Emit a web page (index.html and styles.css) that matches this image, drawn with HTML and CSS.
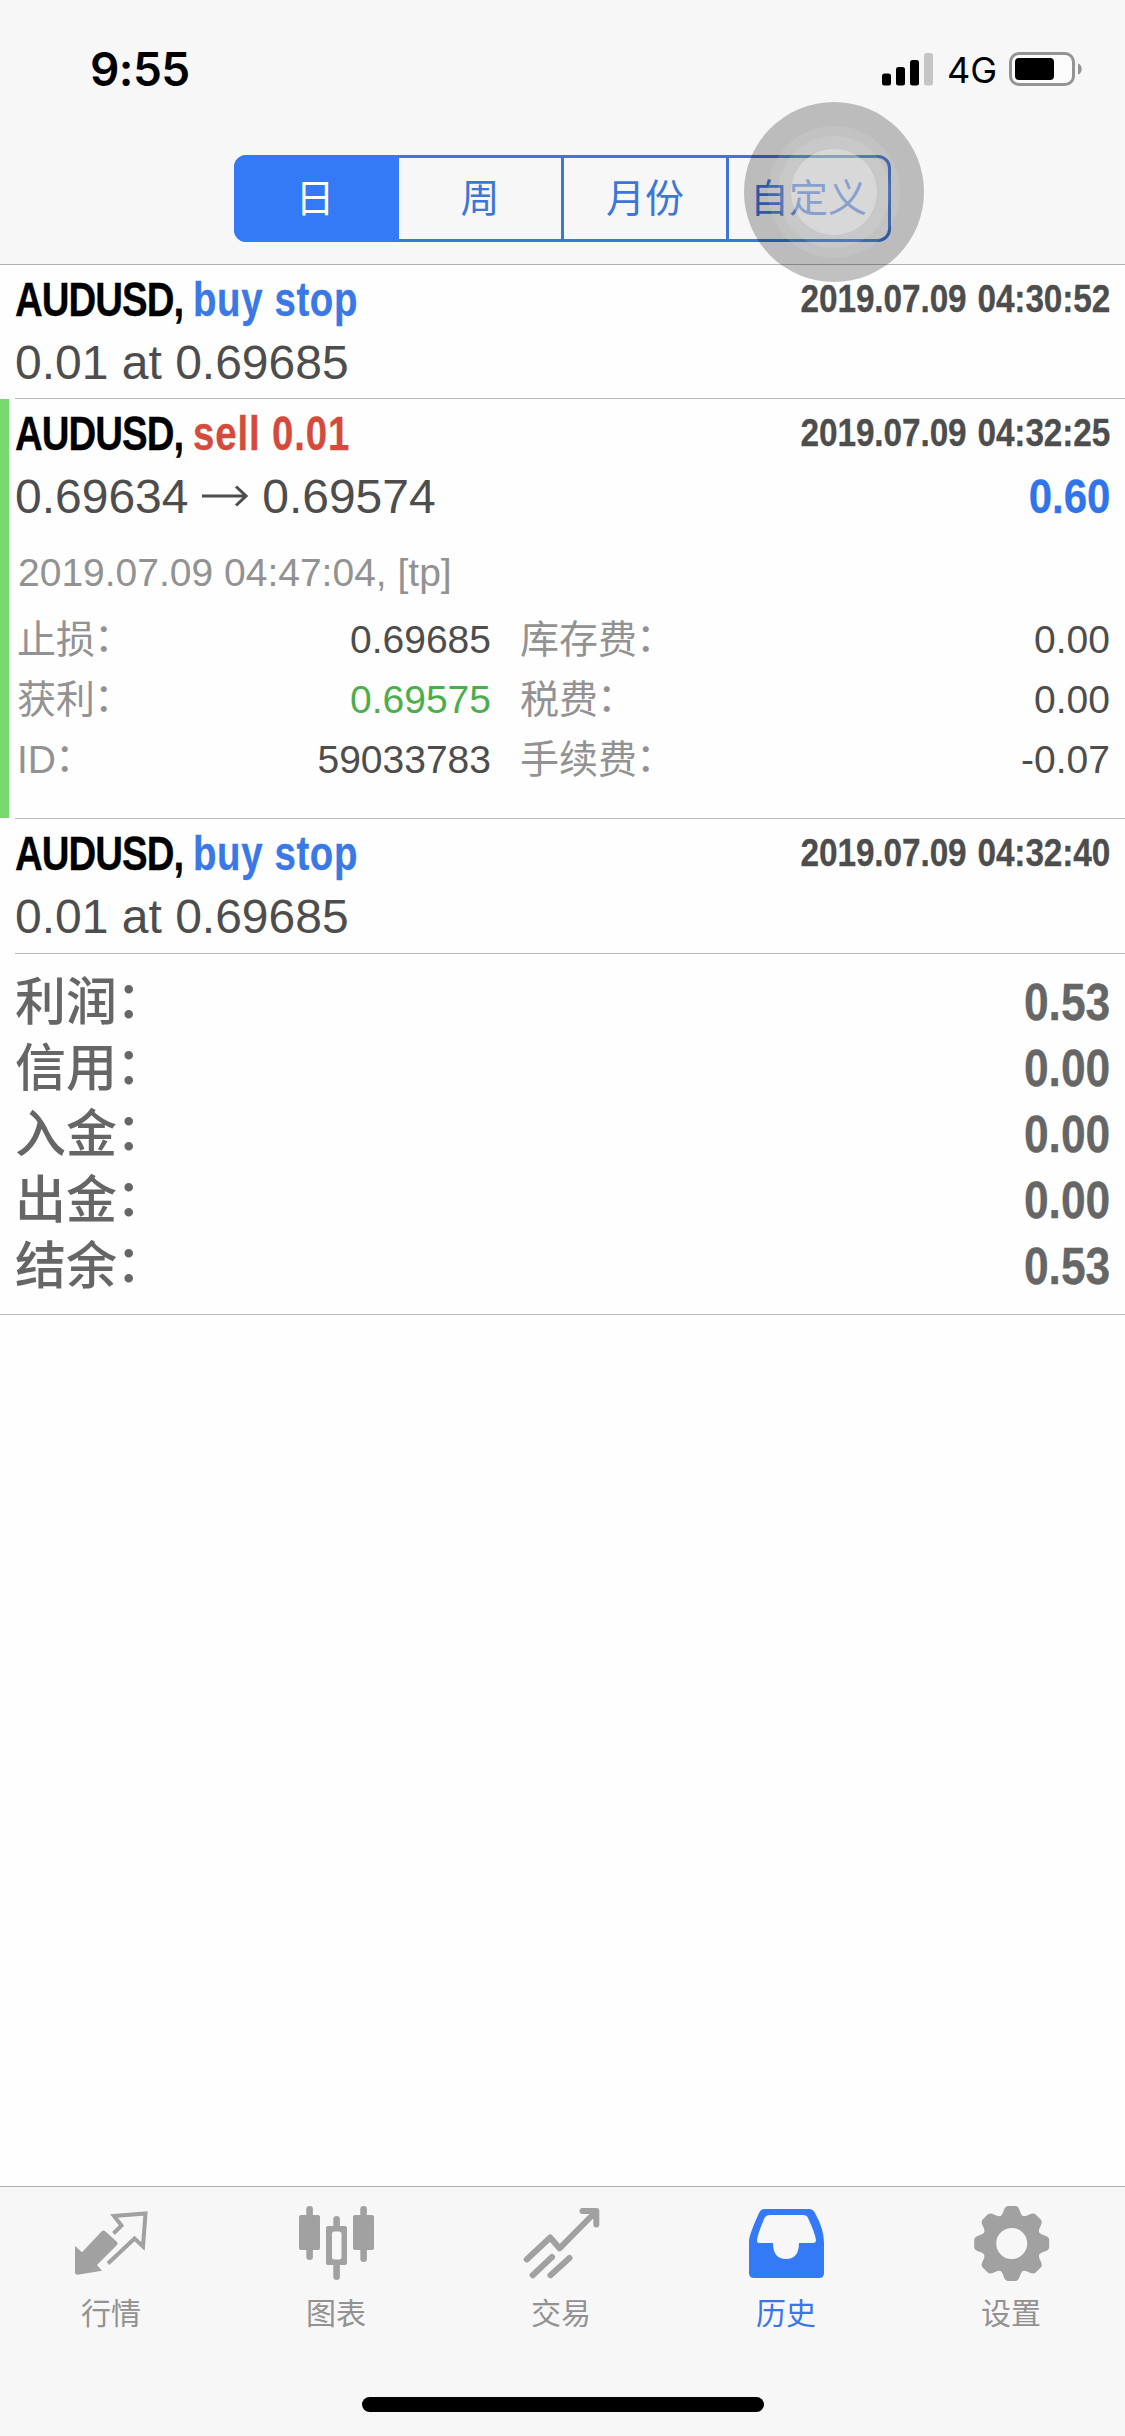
FILE: index.html
```html
<!DOCTYPE html>
<html lang="zh-CN">
<head>
<meta charset="utf-8">
<title>历史</title>
<link rel="stylesheet" href="styles.css">
</head>
<body>
<div class="app">
  <header class="header">
    <div class="status">
      <span class="clock">9:55</span>
      <div class="status-right">
        <svg class="signal" width="52" height="33" viewBox="0 0 52 33"><rect x="0" y="20.500" width="9" height="12" rx="2.500"/><rect x="14" y="14" width="9" height="18.500" rx="2.500"/><rect x="28" y="7" width="9" height="25.500" rx="2.500"/><rect x="42" y="0" width="9" height="32.500" rx="2.500" fill="#c5c5c5"/></svg>
        <span class="network">4G</span>
        <svg class="battery" width="74" height="34" viewBox="0 0 74 34"><rect x="1.500" y="1.500" width="63" height="31" rx="8.500" fill="#fcfcfc" stroke="#949494" stroke-width="3"/><rect x="6" y="6" width="39" height="22" rx="4"/><path d="M69 11.500c5 1.500 5 9.500 0 11z" fill="#949494"/></svg>
      </div>
    </div>
    <nav class="segments">
      <span class="segment segment-on">日</span><span class="segment segment-after">周</span><span class="segment">月份</span><span class="segment">自定义</span>
    </nav>
    <div class="touch"><i class="ring ring-a"></i><i class="ring ring-b"></i><i class="ring ring-c"></i></div>
  </header>

  <main class="history">
    <section class="deal">
      <div class="deal-head"><h2 class="deal-title"><span class="symbol">AUDUSD, </span><span class="buy">buy stop</span></h2><time class="deal-time">2019.07.09 04:30:52</time></div>
      <div class="deal-price">0.01 at 0.69685</div>
    </section>
    <section class="deal deal-open">
      <div class="deal-head"><h2 class="deal-title"><span class="symbol">AUDUSD, </span><span class="sell">sell 0.01</span></h2><time class="deal-time">2019.07.09 04:32:25</time></div>
      <div class="deal-price"><span class="move">0.69634 <svg class="arrow" width="46" height="22" viewBox="0 0 46 22"><path d="M0 11H44M34 1.500L44 11L34 20.500"/></svg> 0.69574</span><b class="profit">0.60</b></div>
      <div class="comment">2019.07.09 04:47:04, [tp]</div>
      <dl class="details">
        <dt>止损<span class="colon">：</span></dt><dd>0.69685</dd><dt>库存费<span class="colon">：</span></dt><dd>0.00</dd>
        <dt>获利<span class="colon">：</span></dt><dd class="hit">0.69575</dd><dt>税费<span class="colon">：</span></dt><dd>0.00</dd>
        <dt>ID<span class="colon">：</span></dt><dd>59033783</dd><dt>手续费<span class="colon">：</span></dt><dd>-0.07</dd>
      </dl>
    </section>
    <section class="deal deal-last">
      <div class="deal-head"><h2 class="deal-title"><span class="symbol">AUDUSD, </span><span class="buy">buy stop</span></h2><time class="deal-time">2019.07.09 04:32:40</time></div>
      <div class="deal-price">0.01 at 0.69685</div>
    </section>
    <section class="summary">
      <div class="total"><span>利润<span class="colon">：</span></span><b>0.53</b></div>
      <div class="total"><span>信用<span class="colon">：</span></span><b>0.00</b></div>
      <div class="total"><span>入金<span class="colon">：</span></span><b>0.00</b></div>
      <div class="total"><span>出金<span class="colon">：</span></span><b>0.00</b></div>
      <div class="total"><span>结余<span class="colon">：</span></span><b>0.53</b></div>
    </section>
  </main>

  <footer class="footer">
    <nav class="tabs">
      <div class="tab">
        <svg width="225" height="100" viewBox="0 0 225 100"><path d="M75 59L82 65.300L101.500 44.500Q103.500 42.500 105.500 44.500L116.500 54.500Q118.500 56.500 116.500 58.500L97 78L102 83.700L77.500 87.700Q75 87.700 75 85Z" fill="#a1a1a1"/><path d="M113.500 46.500L121.500 38.500L114 29L145.500 26.500L143 59.500L134.500 51.500L108 76.500" fill="none" stroke="#a1a1a1" stroke-width="4"/></svg>
        <span>行情</span>
      </div>
      <div class="tab">
        <svg width="225" height="100" viewBox="0 0 225 100" fill="#a1a1a1"><rect x="74" y="28" width="21" height="35" rx="2"/><rect x="81.300" y="19" width="6.600" height="54" rx="3.300"/><rect x="128" y="28" width="21" height="35" rx="2"/><rect x="135.300" y="19" width="6.600" height="56" rx="3.300"/><path d="M103 39H120Q122 39 122 41V76Q122 78 120 78H103Q101 78 101 76V41Q101 39 103 39ZM107 47V70Q107 72.500 109.500 72.500H114Q116.500 72.500 116.500 70V47Q116.500 44.500 114 44.500H109.500Q107 44.500 107 47Z" fill-rule="evenodd"/><rect x="108.300" y="29" width="6.600" height="13" rx="3.300"/><path d="M108.300 76H114.900V90Q114.900 93 111.600 93Q108.300 93 108.300 90Z"/></svg>
        <span>图表</span>
      </div>
      <div class="tab">
        <svg width="225" height="100" viewBox="0 0 225 100" fill="none" stroke="#a1a1a1" stroke-width="6" stroke-linecap="round" stroke-linejoin="round"><path d="M76.700 72.500L100.200 50.500L109.500 61.300L145.500 25M132.500 24H146.300V37.500M82.700 88.300L102 70M100.500 88.300L119.500 71"/></svg>
        <span>交易</span>
      </div>
      <div class="tab tab-on">
        <svg width="225" height="100" viewBox="0 0 225 100"><path d="M89 22H134Q138 22 140 26Q149 42 149 56V86Q149 91 144 91H79Q74 91 74 86V54Q74 48 84 26Q86 22 89 22ZM95 28Q91 28 89.500 31Q82 48 82 54Q82 56 84 56H98Q98 72 111 72Q124 72 124 56H138Q141 56 141 53Q140 46 133 31Q132 28 128 28Z" fill="#347af6" fill-rule="evenodd"/></svg>
        <span>历史</span>
      </div>
      <div class="tab">
        <svg width="225" height="100" viewBox="0 0 225 100">
          <defs><path id="tooth" d="M-13 -24L-11 -27.500Q-9 -29 -8 -33Q-6.500 -37.500 -3.500 -37.500H3.500Q6.500 -37.500 8 -33Q9 -29 11 -27.500L13 -24Z"/></defs>
          <g transform="translate(111.700 56.500)" fill="#a1a1a1">
            <circle r="22.500" fill="none" stroke="#a1a1a1" stroke-width="14"/>
            <use href="#tooth"/><use href="#tooth" transform="rotate(45)"/><use href="#tooth" transform="rotate(90)"/><use href="#tooth" transform="rotate(135)"/><use href="#tooth" transform="rotate(180)"/><use href="#tooth" transform="rotate(225)"/><use href="#tooth" transform="rotate(270)"/><use href="#tooth" transform="rotate(315)"/>
          </g>
        </svg>
        <span>设置</span>
      </div>
    </nav>
    <div class="home"></div>
  </footer>
</div>
</body>
</html>
```
FILE: styles.css
```css
* { box-sizing: border-box; margin: 0; padding: 0; }
body {
  width: 1125px;
  background: #fefefe;
  color: #4d4d4d;
  font-family: "Liberation Sans", "Noto Sans CJK SC", sans-serif;
}
.app { display: flex; flex-direction: column; height: 2436px; overflow: hidden; }

.header { position: relative; height: 265px; background: #f7f7f7; border-bottom: 1px solid #b0b0b0; }
.status { display: flex; justify-content: space-between; height: 155px; padding: 40px 42px 0 90px; color: #000; font-family: Inter, sans-serif; }
.clock { font-size: 46px; font-weight: 600; line-height: 59px; letter-spacing: -.6px; }
.status-right { display: flex; align-items: flex-start; padding-top: 12px; }
.signal { margin: 1px 13px 0 0; }
.network { width: 62px; font-size: 36px; line-height: 36px; }
.segments { display: grid; grid-template-columns: 162px 162px 165px 162px; grid-template-rows: 81px; width: 657px; height: 87px; margin-left: 234px; border: 3px solid #3c76d8; border-radius: 13px; }
.segment { border-left: 3px solid #3c76d8; color: #3c76d8; font-size: 39px; line-height: 82px; text-align: center; }
.segment-on { margin: -3px 0 -3px -3px; padding-right: 3px; border: 0; border-radius: 12px 0 0 12px; background: #347af6; color: #fff; line-height: 87px; }
.segment-after { border-left: 0; }
.touch { position: absolute; left: 744px; top: 102px; z-index: 2; width: 180px; height: 180px; border-radius: 50%; background: rgba(0, 0, 0, .24); }
.ring { position: absolute; border-radius: 50%; background: rgba(255, 255, 255, .1); }
.ring-a { inset: 24px; }
.ring-b { inset: 34px; }
.ring-c { inset: 47px; background: rgba(255, 255, 255, .3); }

.deal { position: relative; height: 134px; padding: 0 15px; }
.deal::after { content: ""; position: absolute; left: 15px; right: 0; bottom: 0; height: 1px; background: #bababa; }
.deal-open { height: 420px; }
.deal-open::before { content: ""; position: absolute; left: 0; top: 0; width: 9px; height: 419px; background: #76d86f; }
.deal-last { height: 135px; }
.deal-head { display: flex; justify-content: space-between; height: 69px; padding-top: 7px; }
.deal-title { font-size: 48px; line-height: 55px; white-space: pre; transform: scaleX(.8); transform-origin: 0 0; -webkit-text-stroke: .3px; }
.symbol { color: #000; letter-spacing: -1.2px; }
.buy { color: #3a78e6; letter-spacing: .8px; }
.sell { color: #d44b3c; letter-spacing: 1.1px; }
.deal-time { font-size: 39px; font-weight: 700; line-height: 54px; letter-spacing: -.1px; word-spacing: 2px; transform: scaleX(.855); transform-origin: 100% 0; -webkit-text-stroke: .3px; }
.deal-price { display: flex; justify-content: space-between; font-size: 48px; line-height: 58px; }
.arrow { margin: 0 1px 6px 0; fill: none; stroke: #4d4d4d; stroke-width: 3; }
.profit { color: #2f74ea; transform: scaleX(.875); transform-origin: 100% 0; -webkit-text-stroke: .3px; }
.comment { margin: 22px 0 0 3px; color: #929292; font-size: 39px; line-height: 50px; }
.details { display: grid; grid-template-columns: 160px 314px 200px 1fr; grid-auto-rows: 60px; margin: 12px 0 0 2px; font-size: 39px; line-height: 60px; }
.details dt { color: #929292; }
.details dd { text-align: right; }
.details dd + dt { padding-left: 29px; white-space: nowrap; }
.details dd + dt:nth-of-type(odd) { padding-left: 0; }
.details .hit { color: #4bae4c; }
.colon { position: relative; left: -1px; top: -2px; }

.summary { height: 361px; padding: 16px 15px 0; border-bottom: 1px solid #bababa; color: #666; }
.total { display: flex; justify-content: space-between; height: 66px; font-size: 51px; font-weight: 500; line-height: 66px; }
.total b { transform: scaleX(.87); transform-origin: 100% 0; -webkit-text-stroke: .3px; }

.footer { height: 250px; margin-top: auto; border-top: 1px solid #b0b0b0; background: #f7f7f7; }
.tabs { display: flex; height: 191px; }
.tab { display: flex; flex-direction: column; width: 225px; color: #929292; font-size: 30px; line-height: 54px; text-align: center; }
.tab svg { display: block; }
.tab span { padding-right: 3px; }
.tab-on { color: #3c76e4; }
.home { width: 402px; height: 15px; margin: 19px auto 0; border-radius: 8px; background: #000; }
```
